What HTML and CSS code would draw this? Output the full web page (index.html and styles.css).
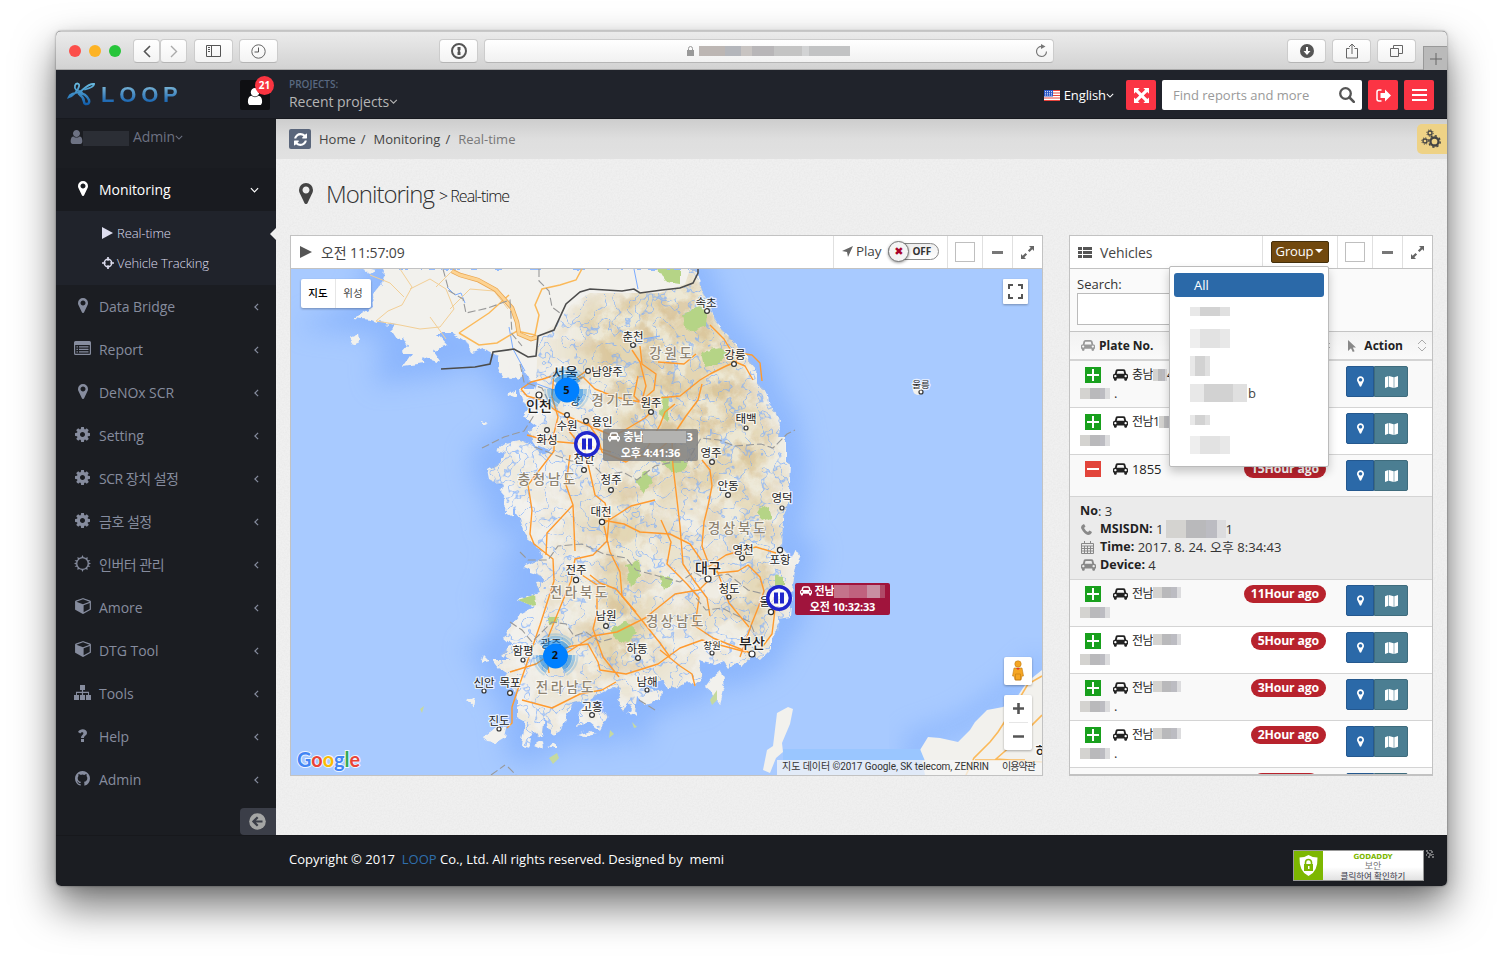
FILE: index.html
```html
<!DOCTYPE html>
<html lang="ko">
<head>
<meta charset="utf-8">
<title>LOOP - Monitoring</title>
<link rel="stylesheet" href="styles.css">
</head>
<body>
<svg class="defs" width="0" height="0" aria-hidden="true">
  <symbol id="marker" viewBox="384 128 1024 1536"><path d="M1152 640q0-106-75-181t-181-75-181 75-75 181 75 181 181 75 181-75 75-181zm256 0q0 109-33 179l-364 774q-16 33-47.5 52t-67.5 19-67.5-19-46.5-52l-365-774q-33-70-33-179 0-212 150-362t362-150 362 150 150 362z"/></symbol>
  <symbol id="cog" viewBox="128 128 1536 1536"><path d="M1152 896q0-106-75-181t-181-75-181 75-75 181 75 181 181 75 181-75 75-181zm512-109v222q0 12-8 23t-20 13l-185 28q-19 54-39 91 35 50 107 138 10 12 10 25t-9 23q-27 37-99 108t-94 71q-12 0-26-9l-138-108q-44 23-91 38-16 136-29 186-7 28-36 28h-222q-14 0-24.5-8.5t-11.5-21.5l-28-184q-49-16-90-37l-141 107q-10 9-25 9-14 0-25-11-126-114-165-168-7-10-7-23 0-12 8-23 15-21 51-66.5t54-70.5q-27-50-41-99l-183-27q-13-2-21-12.5t-8-23.5v-222q0-12 8-23t19-13l186-28q14-46 39-92-40-57-107-138-10-12-10-24 0-10 9-23 26-36 98.5-107.5t94.5-71.5q13 0 26 10l138 107q44-23 91-38 16-136 29-186 7-28 36-28h222q14 0 24.5 8.5t11.5 21.5l28 184q49 16 90 37l142-107q9-9 24-9 13 0 25 10 129 119 165 170 7 8 7 22 0 12-8 23-15 21-51 66.5t-54 70.5q26 50 41 98l183 28q13 2 21 12.5t8 23.5z"/></symbol>
  <symbol id="cube" viewBox="0 120 1664 1680"><path d="M896 1629l640-349v-636l-640 233v752zm-64-865l698-254-698-254-698 254zm832-252v768q0 35-18 65t-49 47l-704 384q-28 16-61 16t-61-16l-704-384q-31-17-49-47t-18-65v-768q0-40 23-73t61-47l704-256q22-8 44-8t44 8l704 256q38 14 61 47t23 73z"/></symbol>
  <symbol id="car" viewBox="0 128 2048 1600"><path d="M480 1088q0-66-47-113t-113-47-113 47-47 113 47 113 113 47 113-47 47-113zm36-320h1016l-89-357q-2-8-14-17.5t-21-9.5h-768q-9 0-21 9.5t-14 17.5zm1372 320q0-66-47-113t-113-47-113 47-47 113 47 113 113 47 113-47 47-113zm160-96v384q0 14-9 23t-23 9h-96v128q0 80-56 136t-136 56-136-56-56-136v-128h-1024v128q0 80-56 136t-136 56-136-56-56-136v-128h-96q-14 0-23-9t-9-23v-384q0-93 65.5-158.5t158.5-65.5h28l105-419q23-94 104-157.5t179-63.5h768q98 0 179 63.5t104 157.5l105 419h28q93 0 158.5 65.5t65.5 158.5z"/></symbol>
  <symbol id="user" viewBox="256 128 1280 1536"><path d="M1536 1399q0 109-62.5 187t-150.5 78h-854q-88 0-150.5-78t-62.5-187q0-85 8.5-160.5t31.5-152 58.5-131 94-89 134.5-34.5q131 128 313 128t313-128q76 0 134.5 34.5t94 89 58.5 131 31.5 152 8.5 160.5zm-256-887q0 159-112.5 271.5t-271.5 112.5-271.5-112.5-112.5-271.5 112.5-271.5 271.5-112.5 271.5 112.5 112.5 271.5z"/></symbol>
  <symbol id="refresh" viewBox="128 128 1536 1536"><path d="M1639 1056q0 5-1 7-64 268-268 434.5t-478 166.5q-146 0-282.5-55t-243.5-157l-129 129q-19 19-45 19t-45-19-19-45v-448q0-26 19-45t45-19h448q26 0 45 19t19 45-19 45l-137 137q71 66 161 102t187 36q134 0 250-65t186-179q11-17 53-117 8-23 30-23h192q13 0 22.5 9.5t9.5 22.5zm25-800v448q0 26-19 45t-45 19h-448q-26 0-45-19t-19-45 19-45l138-138q-148-137-349-137-134 0-250 65t-186 179q-11 17-53 117-8 23-30 23h-199q-13 0-22.5-9.5t-9.5-22.5v-7q65-268 270-434.5t480-166.5q146 0 284 55.5t245 156.5l130-129q19-19 45-19t45 19 19 45z"/></symbol>
  <symbol id="github" viewBox="128 128 1536 1536"><path d="M896 128q209 0 385.5 103t279.5 279.5 103 385.5q0 251-146.5 451.5t-378.5 277.5q-27 5-40-7t-13-30q0-3 .5-76.5t.5-134.5q0-97-52-142 57-6 102.5-18t94-39 81-66.5 53-105 20.5-150.5q0-119-79-206 37-91-8-204-28-9-81 11t-92 44l-38 24q-93-26-192-26t-192 26q-16-11-42.5-27t-83.5-38.5-85-13.5q-45 113-8 204-79 87-79 206 0 85 20.5 150t52.5 105 80.5 67 94 39 102.5 18q-39 36-49 103-21 10-45 15t-57 5-65.5-21.5-55.5-62.5q-19-32-48.5-52t-49.5-24l-20-3q-21 0-29 4.5t-5 11.5 9 14 13 12l7 5q22 10 43.5 38t31.5 51l10 23q13 38 44 61.5t67 30 69.5 7 55.5-3.5l23-4q0 38 .5 88.5t.5 54.5q0 18-13 30t-40 7q-232-77-378.5-277.5t-146.5-451.5q0-209 103-385.5t279.5-279.5 385.5-103z"/></symbol>
  <symbol id="listalt" viewBox="0 0 17 14"><path fill-rule="evenodd" d="M1.500 0h14A1.500 1.500 0 0 1 17 1.500v11a1.500 1.500 0 0 1-1.500 1.500h-14A1.500 1.500 0 0 1 0 12.500v-11A1.500 1.500 0 0 1 1.500 0zM1.200 4v8.300q0 .5.5.5h13.600q.5 0 .5-.5V4zM2.500 5.300h1.400v1.200H2.500zm2.500 0h9.500v1.200H5zM2.500 7.800h1.400V9H2.500zm2.500 0h9.500V9H5zm-2.500 2.500h1.400v1.200H2.500zm2.500 0h9.500v1.200H5z"/></symbol>
  <symbol id="sitemap" viewBox="0 0 17 15"><path d="M6 0h5v5H9.100v1.800H15V10h2v5h-5v-5h2V7.900H9.100V10H11v5H6v-5h1.900V7.900H3V10h2v5H0v-5h2V6.800h5.900V5H6z"/></symbol>
  <symbol id="sun" viewBox="0 0 17 17"><circle cx="8.500" cy="8.500" r="5.800" fill="none" stroke="currentColor" stroke-width="1.300"/><path d="M8.500 0l1.200 2.500H7.300zM8.500 17l1.200-2.500H7.300zM0 8.500l2.500-1.200v2.400zM17 8.500l-2.500-1.200v2.400zM3.200 2.200l2.800.7-1.900 1.900zM13.800 2.200l-.5 2.700-2-1.900zM3.200 14.800l.6-2.700 2 1.900zM13.800 14.800l-2.700-.7 2-2zM.6 5.200h2.700l-.8 1.900zM16.400 5.200h-2.700l.8 1.900zM.6 11.800h2.700l-.8-1.900zM16.400 11.800h-2.700l.8-1.900z"/></symbol>
  <symbol id="question" viewBox="0 0 9 13"><path d="M3 8.900C2.900 6.500 5.400 6 5.400 4.300 5.400 2.900 3.300 2.800 2.300 4.500L0 2.900C2-1.200 9-.6 9 3.800 9 6.500 6 6.900 6 8.900zM3 10h3v3H3z"/></symbol>
  <symbol id="target" viewBox="0 0 13 13"><circle cx="6.500" cy="6.500" r="4" fill="none" stroke="currentColor" stroke-width="1.600"/><path d="M5.600 0h1.800v4H5.600zM5.600 9h1.800v4H5.600zM0 5.600h4v1.800H0zM9 5.600h4v1.800H9z"/></symbol>
  <symbol id="left" viewBox="0 0 6 10"><path d="M5 1L1 5l4 4" fill="none" stroke="currentColor" stroke-width="1.500"/></symbol>
  <symbol id="down" viewBox="0 0 10 6"><path d="M1 1l4 4 4-4" fill="none" stroke="currentColor" stroke-width="1.300"/></symbol>
  <symbol id="expand" viewBox="0 0 13 13"><path d="M8 0h5v5l-1.700-1.700-2.800 2.800-1.600-1.600 2.800-2.800zM5 13H0V8l1.700 1.700 2.800-2.800 1.600 1.600-2.800 2.800z"/></symbol>
  <symbol id="mapicon" viewBox="0 0 13 12"><path d="M0 1.300L3.400 0v10.700L0 12zM4 0l4.700 1.300V12L4 10.700z"/><path d="M9.300 1.300L13 0v10.700L9.300 12z"/></symbol>
  <symbol id="sort" viewBox="0 0 10 13"><path d="M1 5l4-4 4 4M1 8l4 4 4-4" fill="none" stroke="#aaa"/></symbol>
  <symbol id="cluster" viewBox="-23 -23 46 46">
    <g fill="none" stroke="#0a84e8"><path stroke-width="4" opacity=".6" d="M-7.200 12.500A14.500 14.500 0 0 1-14.500-1M14.500-1A14.500 14.500 0 0 1 7.200 12.500M-12-8A14.500 14.500 0 0 1 12-8"/><path stroke-width="3" opacity=".35" d="M-9.200 16A18.500 18.500 0 0 1-18.500-1M18.500-1A18.500 18.500 0 0 1 9.200 16M-15-11A18.500 18.500 0 0 1 15-11"/><path stroke-width="2" opacity=".2" d="M-11 19A22 22 0 0 1-22-1M22-1A22 22 0 0 1 11 19M-18-12.500A22 22 0 0 1 18-12.500"/></g>
    <circle r="12.500" fill="#0080ff"/>
  </symbol>
  <symbol id="pause" viewBox="-14 -14 28 28"><circle r="11.300" fill="#fff" fill-opacity=".8" stroke="#2026cc" stroke-width="3.400"/><path d="M-5-5.500h4v11h-4zM1-5.500h4v11H1z" fill="#2026cc"/></symbol>
</svg>

<div class="window">
  <div class="toolbar">
    <div class="lights"><i class="red"></i><i class="yellow"></i><i class="green"></i></div>
    <div class="nav">
      <span class="tb"><svg width="8" height="13"><path d="M7 1L1.500 6.500 7 12" fill="none" stroke="#555" stroke-width="1.600"/></svg></span>
      <span class="tb"><svg width="8" height="13"><path d="M1 1l5.500 5.500L1 12" fill="none" stroke="#aaa" stroke-width="1.400"/></svg></span>
    </div>
    <span class="tb wide"><svg width="15" height="12"><path d="M.5.500h14v11H.5zM5.500.500v11M2 2.500h2M2 4.500h2M2 6.500h2" fill="none" stroke="#555"/></svg></span>
    <span class="tb wide clock"><svg width="15" height="15"><circle cx="7.500" cy="7.500" r="6.700" fill="none" stroke="#666"/><path d="M7.500 3.500v4.500h-4" fill="none" stroke="#555"/></svg></span>
    <span class="tb wide onep"><svg width="16" height="16"><circle cx="8" cy="8" r="7" fill="none" stroke="#555" stroke-width="2"/><path d="M6.500 4h3v3l-.8 1 .8 1v3h-3V9l.8-1-.8-1z" fill="#555"/></svg></span>
    <div class="url">
      <svg width="7" height="10"><path d="M0 4h7v6H0z" fill="#999"/><path d="M1.500 4V2.500a2 2 0 0 1 4 0V4" fill="none" stroke="#999"/></svg>
      <span class="mosaic addr"></span>
      <svg class="reload" width="13" height="14"><path d="M7 2.500A5 5 0 1 0 11.500 7.500" fill="none" stroke="#777" stroke-width="1.200"/><path d="M6 0l4.500 2.500L6 5z" fill="#777"/></svg>
    </div>
    <span class="tb wide dl"><svg width="14" height="14"><circle cx="7" cy="7" r="7" fill="#555"/><path d="M6 3h2v4h2.500L7 11 3.500 7H6z" fill="#fff"/></svg></span>
    <span class="tb wide"><svg width="12" height="16"><path d="M3.500 5.500h-3v9.500h11V5.500h-3M6 11V1.500M3 4l3-3 3 3" fill="none" stroke="#666"/></svg></span>
    <span class="tb wide tabs"><svg width="13" height="12"><path d="M.5 3.500h8v8h-8zM3.500 3V.5h9v8H9" fill="none" stroke="#666"/></svg></span>
    <span class="newtab"><svg width="12" height="12"><path d="M6 0v12M0 6h12" stroke="#666"/></svg></span>
  </div>

  <header class="header">
    <div class="brand">
      <svg class="swirl" width="29" height="24" viewBox="0 0 29 24" fill="none"><defs><linearGradient id="sw" gradientUnits="userSpaceOnUse" x1="0" y1="0" x2="0" y2="24"><stop offset="0" stop-color="#6ec1e4"/><stop offset="1" stop-color="#0b57a8"/></linearGradient></defs><g fill="none" stroke="url(#sw)" stroke-width="1.800" stroke-linecap="round"><path d="M27 2C21 1.500 17 7 14 9 10 10 7 7 8 3.500 9 .5 13 1 12 4.500 11 9 6 14 1.500 15.500 3 10.500 9 11 15 10.500"/><path stroke-width="2.500" d="M12 12c4-2 8 2 10 6 1 3-1 4.500-3.500 4-3.500-1 1-5-5.500-9"/><path d="M27 2c0 3-5 4.500-9 5.500"/></g></svg>
      <span class="logo">LOOP</span>
      <span class="activity"><svg width="16" height="17"><use href="#user"/></svg><b>21</b></span>
    </div>
    <div class="projects"><span class="plabel">PROJECTS:</span><span class="pname">Recent projects<svg width="9" height="5"><use href="#down"/></svg></span></div>
    <div class="lang"><svg width="16" height="11" viewBox="0 0 16 11"><path fill="#fff" d="M0 0h16v11H0z"/><path d="M0 .5h16M0 3h16M0 5.500h16M0 8h16M0 10.500h16" stroke="#e8443c" stroke-width="1.200"/><path fill="#2a56c8" d="M0 0h9v6.500H0z"/><path d="M1 1.500h7M1 3.300h7M1 5h7" stroke="#fff" stroke-width=".8" stroke-dasharray="1 1"/></svg><span>English</span><svg width="8" height="5"><use href="#down"/></svg></div>
    <span class="hbtn"><svg width="15" height="15" viewBox="0 0 16 16" fill="#fff"><path d="M0 0h6L4.200 1.800 8 5.600l3.800-3.800L10 0h6v6l-1.800-1.800L10.400 8l3.800 3.800L16 10v6h-6l1.800-1.800L8 10.400l-3.800 3.800L6 16H0v-6l1.800 1.800L5.600 8 1.800 4.200 0 6z"/></svg></span>
    <div class="find"><span>Find reports and more</span><svg width="16" height="16"><circle cx="6.500" cy="6.500" r="5.300" fill="none" stroke="#555" stroke-width="2.300"/><path d="M10.500 10.500l4.300 4.300" stroke="#555" stroke-width="2.600" stroke-linecap="round"/></svg></div>
    <span class="hbtn"><svg width="15" height="13"><path d="M5.500 1H3Q1 1 1 3v7q0 2 2 2h2.500" fill="none" stroke="#fff" stroke-width="1.500"/><path d="M4.500 4H9V.5L15 6.500 9 12.500V9H4.500z" fill="#fff"/></svg></span>
    <span class="hbtn"><svg width="15" height="12"><path d="M0 1h15M0 6h15M0 11h15" stroke="#fff" stroke-width="2"/></svg></span>
  </header>

  <div class="body">
    <aside class="side">
      <div class="login"><svg width="13" height="14"><use href="#user"/></svg><span class="mosaic dark"></span><span>Admin</span><svg width="8" height="5"><use href="#down"/></svg></div>
      <div class="item active"><span class="ic"><svg width="10" height="15"><use href="#marker"/></svg></span>Monitoring<svg class="arr" width="9" height="6"><use href="#down"/></svg></div>
      <div class="sub">
        <div class="subitem cur"><svg width="11" height="12"><path d="M0 0l11 6-11 6z"/></svg><span>Real-time</span></div>
        <div class="subitem"><svg width="12" height="12"><use href="#target"/></svg><span>Vehicle Tracking</span></div>
      </div>
      <div class="item"><span class="ic"><svg width="10" height="15"><use href="#marker"/></svg></span>Data Bridge<svg class="arr" width="5" height="8"><use href="#left"/></svg></div>
      <div class="item"><span class="ic"><svg width="17" height="14"><use href="#listalt"/></svg></span>Report<svg class="arr" width="5" height="8"><use href="#left"/></svg></div>
      <div class="item"><span class="ic"><svg width="10" height="15"><use href="#marker"/></svg></span>DeNOx SCR<svg class="arr" width="5" height="8"><use href="#left"/></svg></div>
      <div class="item"><span class="ic"><svg width="15" height="15"><use href="#cog"/></svg></span>Setting<svg class="arr" width="5" height="8"><use href="#left"/></svg></div>
      <div class="item ko"><span class="ic"><svg width="15" height="15"><use href="#cog"/></svg></span>SCR 장치 설정<svg class="arr" width="5" height="8"><use href="#left"/></svg></div>
      <div class="item ko"><span class="ic"><svg width="15" height="15"><use href="#cog"/></svg></span>금호 설정<svg class="arr" width="5" height="8"><use href="#left"/></svg></div>
      <div class="item ko"><span class="ic"><svg width="17" height="17"><use href="#sun"/></svg></span>인버터 관리<svg class="arr" width="5" height="8"><use href="#left"/></svg></div>
      <div class="item"><span class="ic"><svg width="16" height="16"><use href="#cube"/></svg></span>Amore<svg class="arr" width="5" height="8"><use href="#left"/></svg></div>
      <div class="item"><span class="ic"><svg width="16" height="16"><use href="#cube"/></svg></span>DTG Tool<svg class="arr" width="5" height="8"><use href="#left"/></svg></div>
      <div class="item"><span class="ic"><svg width="17" height="15"><use href="#sitemap"/></svg></span>Tools<svg class="arr" width="5" height="8"><use href="#left"/></svg></div>
      <div class="item"><span class="ic"><svg width="9" height="13"><use href="#question"/></svg></span>Help<svg class="arr" width="5" height="8"><use href="#left"/></svg></div>
      <div class="item"><span class="ic"><svg width="15" height="15"><use href="#github"/></svg></span>Admin<svg class="arr" width="5" height="8"><use href="#left"/></svg></div>
      <div class="minify"><svg width="17" height="17"><circle cx="8.500" cy="8.500" r="8.300" fill="#a5a6a5"/><path d="M13.500 8.500H5M8.700 4.200L4.400 8.500l4.300 4.300" fill="none" stroke="#3b3e48" stroke-width="2.200"/></svg></div>
    </aside>

    <main class="main">
      <div class="ribbon">
        <span class="rbtn"><svg width="13" height="13"><use href="#refresh"/></svg></span>
        <span class="crumb">Home</span><i>/</i><span class="crumb">Monitoring</span><i>/</i><span class="crumb last">Real-time</span>
        <span class="gears"><svg width="20" height="20" viewBox="0 0 20 20"><g fill="none" stroke="#444"><circle cx="13.500" cy="12.500" r="4" stroke-width="2.300"/><circle cx="13.500" cy="12.500" r="5.700" stroke-width="1.500" stroke-dasharray="2.200 2.200"/><circle cx="4" cy="12" r="2" stroke-width="1.300"/><circle cx="4" cy="12" r="3.200" stroke-dasharray="1.200 1.300"/><circle cx="9" cy="4" r="2" stroke-width="1.300"/><circle cx="9" cy="4" r="3.200" stroke-dasharray="1.200 1.300"/></g></svg></span>
      </div>
      <h1><svg width="14" height="21"><use href="#marker"/></svg><span class="t1">Monitoring</span><span class="t2">&gt; Real-time</span></h1>

      <div class="panels">
        <section class="panel">
          <div class="phead"><svg class="pi" width="12" height="12"><path d="M0 0l12 6-12 6z"/></svg><h2>오전 11:57:09</h2>
            <div class="cell play"><svg width="11" height="11"><path d="M11 0L6 11 5 6 0 5z"/></svg><span>Play</span><span class="switch"><b></b><em>OFF</em></span></div>
            <div class="cell c35"><i class="box"></i></div><div class="cell c30"><i class="dash"></i></div><div class="cell c30"><svg width="13" height="13"><use href="#expand"/></svg></div>
          </div>
          <svg class="map" width="751" height="506" viewBox="291 269 751 506">
            <defs>
              <path id="korea" d="M383 269L385 273 382 283 372 295 373 307 360 315 353 318 372 320 378 322 397 325 391 331 397 340 403 337 408 346 402 353 412 353 403 366 410 365 427 363 422 357 436 362 440 360 433 350 448 345 437 333 453 333 467 342 472 352 483 348 490 353 498 357 498 368 503 378 516 377 523 378 520 363 527 377 537 383 535 390 520 390 523 403 531 407 523 417 537 427 528 430 533 443 543 447 553 450 543 455 537 447 520 440 507 443 497 450 505 453 500 463 488 470 490 480 503 487 500 492 507 500 505 510 515 507 522 525 528 540 540 548 543 558 523 567 530 570 530 573 543 577 543 582 535 583 540 593 518 600 535 607 520 615 510 627 503 637 512 645 500 655 512 660 493 660 499 668 507 673 503 683 515 690 517 700 517 717 526 722 521 745 529 747 533 730 537 737 543 733 545 713 548 728 553 735 562 730 567 713 573 703 587 700 580 713 577 727 590 722 600 730 608 715 596 708 590 700 600 693 613 687 621 690 617 702 623 712 627 702 635 713 637 697 645 704 661 699 660 690 643 687 660 680 663 680 668 688 680 687 687 680 695 687 703 675 698 660 714 664 723 660 729 669 736 662 742 667 752 656 760 660 770 650 770 637 779 630 778 619 790 617 793 583 797 563 801 555 795 551 792 558 782 547 783 517 788 505 790 463 785 462 785 437 779 437 780 417 769 405 765 390 757 383 757 370 745 356 732 340 720 328 715 320 710 305 703 293 695 269z"/>
              <clipPath id="land"><use href="#korea"/></clipPath>
              <clipPath id="southclip"><path d="M480 400L536 385 538 337 560 320 571 305 590 293 660 293 685 284 690 269 860 269 860 760 440 760z"/></clipPath>
              <filter id="b6" x="-20%" y="-20%" width="140%" height="140%"><feGaussianBlur stdDeviation="13"/></filter>
              <filter id="b12" x="-20%" y="-20%" width="140%" height="140%"><feGaussianBlur stdDeviation="12"/></filter>
              <filter id="relief" x="0" y="0" width="100%" height="100%" color-interpolation-filters="sRGB"><feTurbulence type="fractalNoise" baseFrequency=".035" numOctaves="5" seed="8"/><feColorMatrix values="0 0 0 0 .88  0 0 0 0 .81  0 0 0 0 .66  5 1.500 0 0 -2.800"/></filter>
              <filter id="relief2" x="0" y="0" width="100%" height="100%" color-interpolation-filters="sRGB"><feTurbulence type="fractalNoise" baseFrequency=".05" numOctaves="6" seed="23"/><feColorMatrix values="0 0 0 0 .80  0 0 0 0 .68  0 0 0 0 .48  5 0 0 0 -2.400"/></filter>
              <filter id="rivers" x="0" y="0" width="100%" height="100%" color-interpolation-filters="sRGB"><feTurbulence type="fractalNoise" baseFrequency=".055" numOctaves="3" seed="4"/><feComponentTransfer><feFuncA type="table" tableValues="0 0 0 0 0 0 0 0 0 0 0 0 0 0 0 0 0 0 0 1 0 0 0 0 0 0 0 0 0 0 0 0 0 0 0 0 0 0 0 0"/></feComponentTransfer><feColorMatrix values="0 0 0 0 .47  0 0 0 0 .67  0 0 0 0 1  0 0 0 1 0"/></filter>
              <filter id="rough" x="-5%" y="-5%" width="110%" height="110%" color-interpolation-filters="sRGB"><feTurbulence type="fractalNoise" baseFrequency=".12" numOctaves="2" seed="3"/><feDisplacementMap in="SourceGraphic" scale="7" xChannelSelector="R" yChannelSelector="G"/></filter>
              <mask id="east"><g filter="url(#b12)" fill="#fff"><path d="M580 310L700 270 745 370 770 450 765 500 735 480 715 520 690 480 650 500 640 560 650 660 600 670 585 640 610 560 600 520 640 470 620 410 590 370zM730 500L770 510 770 640 740 620 745 570z"/><path opacity=".35" d="M560 320L700 275 790 440 780 640 700 640 650 690 535 690 560 500z"/></g></mask>
            </defs>
            <path fill="#a8caff" d="M291 269h751v506H291z"/>
            <use href="#korea" fill="none" stroke="#7dabfc" stroke-width="30" filter="url(#b6)" opacity=".65"/>
            <path d="M1042 660L1010 690 960 725 915 740V775" fill="none" stroke="#7dabfc" stroke-width="18" filter="url(#b12)" opacity=".6"/>
            <g fill="#f2f1ed">
              <g filter="url(#rough)"><use href="#korea"/>
              <path d="M508 362l9-4 5 16-2 6-10-3zM349 338l10-4 1 7-7 3zM365 268l10 2-7 4zM505 498l8 2 0 17-7-4zM484 736l12-10 11 2-2 9-10 6-7-1zM490 661l-9 2 3-8zM466 700l9-4-2 12zM508 395l8-5 0 8zM483 421l6 2-6 3zM577 735l14-4 5 3-12 3zM535 745l8-5 1 9zM548 746l7-2 0 5zM662 691l-1 8-5-3zM711 679l10-9 3 16-5 18-8-12-6-5zM634 708l-6 4 9 5z"/></g>
              <path d="M777 713L788 707 793 709 790 724 782 743 783 752 776 758 770 773 763 770 767 750 773 746z"/>
              <path d="M920 750L928 737 940 738 958 742 970 730 975 722 987 710 1003 707 1017 697 1027 682 1042 670V775H925z"/>
              <circle cx="918" cy="390" r="5"/>
            </g>
            <g clip-path="url(#land)">
              <g clip-path="url(#southclip)">
                <g mask="url(#east)"><path fill="#ebe5cf" opacity=".9" d="M291 269h600v506H291z"/><path d="M480 269h340v506H480z" filter="url(#relief)" opacity=".7"/><path d="M480 269h340v506H480z" filter="url(#relief2)" opacity=".45"/></g>
                <path d="M480 290h340v470H480z" filter="url(#relief)" opacity=".22"/>
                <path d="M291 269h600v506H291z" filter="url(#rivers)" opacity=".7"/>
              </g>
              <g fill="none" stroke="#79abff"><path d="M447 287l8 8 6-2 4 10M509 327l4 22 12 22M634 269l4 20M562 392l-14-4-16-6-8-10M620 330l18 10 22-4"/></g>
              <g fill="#b5d486" filter="url(#rough)"><path d="M658 269h22v15l-14-2zM682 315l17-9 8 5-1 15-12 6-10-8zM702 352l18-4 7 6-9 10-13 3zM634 480l12-8 6 10-8 12zM662 395l8 3-2 22-8-6zM516 598l19-6 1 12-16 3zM610 630l15-9 12 10-8 12-14-4zM625 565l14-4 2 14-10 12zM775 575l9 2 0 8-9 0zM757 510l12-4 3 12-9 4zM660 460l24 0 2 10-15 2zM550 617l9 0-1 6-9 2zM692 692l8 3 0 7zM711 694l6 0-3 10zM660 575l14 3-10 12z"/></g>
            </g>
            <g fill="#c5d9a0"><path d="M420 709l4-3-2 7zM610 730l4 4-5 4zM632 722l5 5-3 1zM549 758l8-5 2 5-6 6zM710 700l7-10 0 10-5 5z"/></g>
            <g fill="none" stroke="#f2cf96" stroke-width="1"><path d="M400 269l12 18-10 18-14 6-12 10 24 4 20 4 20-2 14-18-8-20-16-10-20 10M436 287l18-18M450 309l20-20 24 2 14 18M430 317l16 22M370 275l20 8 14 14"/></g>
            <g fill="none" stroke="#fbb959" stroke-width="1.500"><path d="M459 333l30-20 20-18M459 333l20 12 18-2 20-12 18 4M535 335l4-20-4-10 7-16 18-4 16-5 8-15"/></g>
            <path d="M452 271l8 4 18 5 18 10 16 18 5 14 2 12 12 5 6-2" fill="none" stroke="#e9a550" stroke-width="4.500"/><path d="M452 271l8 4 18 5 18 10 16 18 5 14 2 12 12 5 6-2" fill="none" stroke="#fdd392" stroke-width="3"/>
            <g fill="none" stroke="#ff9a2e" stroke-width="1.400" stroke-linejoin="round">
              <path d="M521 389l10-7 12-3 12-4 13 8 10-6 8-6M521 389l6 7 14 4 14 10 12 6 18 8 28 12 12-6 20-12 6-6"/>
              <path d="M554 372l-2 25 6 20-4 16 0 18-26 34 4 25-2 24 4 10 19 15 1 22-14 44-22 64-6 18 0 16-5 5"/>
              <path d="M567 415l2 16 16 20 6 26 4 18 10 8 4 16-2 22-14 14-18 4-4 22-14 34-12 30 4 28"/>
              <path d="M573 505l-26 28-1 22M575 551l-2-46-7-20 4-30"/>
              <path d="M567 385l16-8 12 12 20 8 25 5 14-12 2-16-14-10-2-18M640 402l-6-6 4-20M658 362l26 2 12-10M640 402l18-4 22-2 20-16 10-6 16-8 10-4 4-9 12 2 8 8 2 18"/>
              <path d="M710 325l14 14 6 10 3 12 12 5 8 14M586 420l12 18 4 14 24 10 20-12 14-25 5-13 10-8M602 452l20 8 32-6 16-14 16-24 12-16 4-16"/>
              <path d="M672 440l1 26 4 34 3 26 3 38 12 18 12 16 3 18M702 460l8 10 2 16-4 20-4 16-2 24 6 16"/>
              <path d="M602 520l22 4 16 8 30 2 20 10 14 20 14 9 20-2 10-6 12 12 4 14-4 12-8 20-12 34M708 567l18-12 14-4 16-4 20 6M709 580l-10 10-24 4-30 24-28 14-24 4-22 14-12 8M715 565l14 38 20 24"/>
              <path d="M604 526l6 26 10 20 2 24 14 17 24 30 10 14M582 575l15 10 0 28-4 16 10 28 16 20M560 650l12-4 16-2 10 18 2 8 26 4 32-10 22-16 22-8 14 4 30 8"/>
              <path d="M510 672l26-8 18-12M522 700l30 8 28-14 22-4 14-8M590 575l10 8 16 6 20 23M661 520l10 22-4 22 20 20 12 14-4 28 18 12 40 16M660 650l20 16 12 8 3 12M655 500l-24 6-28 18M632 350l8 12 6 24-4 14"/>
              <path d="M527 435l22 6 34 3 28 8M760 650l12-16 2-16 2-20"/>
            </g>
            <g fill="none" stroke="#fbb959" stroke-width="1.600"><path d="M1042 676l-14 8-12 20-18 28-8 10-16 16-8 17M1042 715l-30 30-16 14 46 3M975 760h50"/></g>
            <g fill="none" stroke="#999" stroke-width="1.100" stroke-dasharray="8 3"><path d="M443 269l6 22 14 8 3 14 22-5 22-8 2 34 10 12M539 269l0 12 10 10 3 16 8 6M520 364l4 18 18 6 10 20M482 448l22-11 20-6 14-22M535 447l20 8 16 6 18 0 14 14 20-3 14 8 18-14 18-4 14 0 14-24 18 2 16 6 26-2 12 4 14-14 8-4M520 552l8 8 20 0 10-14 24-2 22 10 22 4 10 12 22 6 22 6 14-10 10 6 24-4 20 16 16 4M510 622l12 8 10 12 20-20 14 2 8 12 12-4 14 10 14-4M696 598l10 12 16-2 28 14 8 20M491 775l14-10M508 767l8 8M639 700l16 10"/></g>
            <path d="M441 369l34-2 15-3 3-12 21-3 14 8 8-1 2-20 16-6 12-26 14-12 10-3 16 1 16 1 12-2 6 4 22-3 18-2 13-5 5-10v-10" fill="none" stroke="#4c4c4c" stroke-width="1.600"/>
            <g fill="#fff" stroke="#333" stroke-width="1.200"><circle cx="707" cy="311" r="2.400"/><circle cx="633" cy="345" r="2.400"/><circle cx="734" cy="364" r="2.400"/><circle cx="588" cy="371" r="2.400"/><circle cx="539" cy="395" r="3"/><circle cx="651" cy="412" r="2.400"/><circle cx="746" cy="428" r="2"/><circle cx="567" cy="415" r="2.400"/><circle cx="586" cy="421" r="2.400"/><circle cx="547" cy="430" r="2.400"/><circle cx="584" cy="470" r="2.400"/><circle cx="712" cy="462" r="2.400"/><circle cx="921" cy="392" r="2"/><circle cx="611" cy="490" r="2.400"/><circle cx="728" cy="495" r="2.400"/><circle cx="782" cy="508" r="2"/><circle cx="602" cy="522" r="2.600"/><circle cx="742" cy="558" r="2.400"/><circle cx="780" cy="550" r="2.600"/><circle cx="708" cy="579" r="3"/><circle cx="576" cy="580" r="2.600"/><circle cx="729" cy="597" r="2"/><circle cx="771" cy="612" r="2.600"/><circle cx="606" cy="626" r="2.400"/><circle cx="752" cy="654" r="3"/><circle cx="712" cy="653" r="2"/><circle cx="523" cy="660" r="2"/><circle cx="638" cy="658" r="2.400"/><circle cx="484" cy="691" r="2"/><circle cx="510" cy="693" r="2.400"/><circle cx="647" cy="690" r="2"/><circle cx="592" cy="715" r="2.400"/><circle cx="499" cy="729" r="2"/></g>
            <g class="city"><text x="706" y="307">속초</text><text x="633" y="341">춘천</text><text x="735" y="359">강릉</text><text x="607" y="376">남양주</text><text x="575" y="405">양</text><text x="651" y="407">원주</text><text x="746" y="423">태백</text><text x="567" y="430">수원</text><text x="602" y="426">용인</text><text x="547" y="444">화성</text><text x="584" y="463">천안</text><text x="711" y="457">영주</text><text x="921" y="388" class="s">울릉</text><text x="611" y="484">청주</text><text x="728" y="490">안동</text><text x="782" y="502">영덕</text><text x="601" y="516">대전</text><text x="743" y="554">영천</text><text x="780" y="564">포항</text><text x="576" y="574">전주</text><text x="729" y="593">청도</text><text x="770" y="606">울산</text><text x="606" y="620">남원</text><text x="712" y="649" class="s">창원</text><text x="523" y="655">함평</text><text x="551" y="648">광주</text><text x="637" y="653">하동</text><text x="484" y="687">신안</text><text x="510" y="687">목포</text><text x="647" y="686">남해</text><text x="592" y="711">고흥</text><text x="499" y="725">진도</text></g>
            <g class="city big"><text x="565" y="378">서울</text><text x="539" y="411">인천</text><text x="708" y="573">대구</text><text x="752" y="648">부산</text><text x="1042" y="756">하</text></g>
            <g class="prov"><text x="672" y="358">강원도</text><text x="614" y="405">경기도</text><text x="548" y="484">충청남도</text><text x="738" y="533">경상북도</text><text x="580" y="597">전라북도</text><text x="676" y="626">경상남도</text><text x="566" y="692">전라남도</text></g>
            <use href="#cluster" x="544" y="367" width="46" height="46"/><text class="cnt" x="566.500" y="394">5</text>
            <use href="#cluster" x="532.500" y="633" width="46" height="46"/><text class="cnt" x="555" y="659">2</text>
            <use href="#pause" x="573" y="430" width="28" height="28"/><use href="#pause" x="765" y="584" width="28" height="28"/>
            <path fill="#9ac6ff" d="M783 749h137l5 12H783z"/>
            <rect x="777" y="760" width="265" height="15" fill="#f5f5f5" fill-opacity=".75"/>
            <g class="attr"><text x="782" y="770" textLength="207">지도 데이터 ©2017 Google, SK telecom, ZENRIN</text><text x="1002" y="770" textLength="34">이용약관</text></g>
            <text class="google" x="297" y="767" textLength="63" lengthAdjust="spacingAndGlyphs"><tspan fill="#4285f4">G</tspan><tspan fill="#ea4335">o</tspan><tspan fill="#fbbc05">o</tspan><tspan fill="#4285f4">g</tspan><tspan fill="#34a853">l</tspan><tspan fill="#ea4335">e</tspan></text>
            <g class="ctl" fill="#fff"><rect x="301" y="279" width="70" height="29" rx="2"/><rect x="1003" y="279" width="25" height="25" rx="1"/><rect x="1004" y="657" width="28" height="28" rx="2"/><rect x="1004" y="695" width="28" height="55" rx="2"/></g>
            <path d="M335.500 279v29M1009 722.500h19" stroke="#e6e6e6"/>
            <text class="ct on" x="318" y="297">지도</text><text class="ct" x="353" y="297">위성</text>
            <path d="M1009 289v-4h4M1018 285h4v4M1022 294v4h-4M1013 298h-4v-4" fill="none" stroke="#555" stroke-width="2"/>
            <path d="M1013 708.500h11M1018.500 703v11M1013 736.500h11" stroke="#555" stroke-width="2.600"/>
            <g fill="#f5a623" stroke="#c07a14" stroke-width=".6"><circle cx="1018" cy="664" r="3.200"/><path d="M1014 668h8l1.500 8h-1.500l-1 4h-6l-1-4h-1.500zM1015.500 674h5v6h-5z"/></g><path d="M1016 668h4l-2 2z" fill="#d33"/>
          </svg>
          <div class="tip gray"><div><svg width="12" height="10"><use href="#car"/></svg>충남<span class="mosaic m1"></span>3</div><div>오후 4:41:36</div></div>
          <div class="tip crimson"><div><svg width="12" height="10"><use href="#car"/></svg>전남<span class="mosaic m2"></span></div><div>오전 10:32:33</div></div>
        </section>

        <section class="panel veh">
          <div class="phead"><svg class="pi" width="14" height="11"><path d="M0 0h4v3H0zM5 0h9v3H5zM0 4h4v3H0zM5 4h9v3H5zM0 8h4v3H0zM5 8h9v3H5z"/></svg><h2>Vehicles</h2>
            <div class="cell c75"><span class="group">Group<i></i></span></div>
            <div class="cell c35"><i class="box"></i></div><div class="cell c30"><i class="dash"></i></div><div class="cell c30"><svg width="13" height="13"><use href="#expand"/></svg></div>
          </div>
          <div class="filter"><label>Search:</label><div class="input"></div></div>
          <div class="thead"><svg width="14" height="11"><use href="#car"/></svg><b class="plate">Plate No.</b><svg class="sort" width="10" height="13"><use href="#sort"/></svg><svg class="ptr" width="8" height="12"><path d="M0 0l8 7.500H4.800l1.800 3.700-1.800.8L3 8.300 0 11z"/></svg><b>Action</b><svg class="sort2" width="10" height="13"><use href="#sort"/></svg></div>
          <div class="rows">
            <div class="row odd"><div class="vcell"><div class="l1"><i class="pm"></i><svg width="15" height="12"><use href="#car"/></svg><span>충남</span><span class="mosaic a"></span><span>4</span></div><div class="l2"><span class="mosaic d"></span>.</div></div><div class="acts"><i><svg width="7" height="11"><use href="#marker"/></svg></i><i><svg width="13" height="12"><use href="#mapicon"/></svg></i></div></div>
            <div class="row"><div class="vcell"><div class="l1"><i class="pm"></i><svg width="15" height="12"><use href="#car"/></svg><span>전남1</span><span class="mosaic a"></span></div><div class="l2"><span class="mosaic d"></span></div></div><div class="acts"><i><svg width="7" height="11"><use href="#marker"/></svg></i><i><svg width="13" height="12"><use href="#mapicon"/></svg></i></div></div>
            <div class="row odd short"><div class="vcell"><div class="l1"><i class="pm minus"></i><svg width="15" height="12"><use href="#car"/></svg><span class="num">1855</span></div></div><b class="ago">15Hour ago</b><div class="acts"><i><svg width="7" height="11"><use href="#marker"/></svg></i><i><svg width="13" height="12"><use href="#mapicon"/></svg></i></div></div>
            <div class="detail">
              <div><b>No</b>: 3</div>
              <div><span class="di"><svg width="11" height="11"><path d="M3 0Q0 1 0 4q3 6 7 7 3 0 4-3L8.500 6.500 7 8Q4.500 7 3 4l1.500-1.500z"/></svg></span><b>MSISDN:</b>&nbsp;1<span class="mosaic ph"></span>1</div>
              <div><span class="di"><svg width="13" height="13"><path d="M.5 2.500h12v10H.5zM.5 5h12M.5 7.500h12M.5 10h12M3.500 5v7.500M6.500 5v7.500M9.500 5v7.500M3.500 0v3M9.500 0v3" fill="none" stroke="#888"/></svg></span><b>Time:</b>&nbsp;2017. 8. 24. 오후 8:34:43</div>
              <div><span class="di"><svg width="15" height="12"><use href="#car"/></svg></span><b>Device:</b>&nbsp;4</div>
            </div>
            <div class="row odd"><div class="vcell"><div class="l1"><i class="pm"></i><svg width="15" height="12"><use href="#car"/></svg><span>전남</span><span class="mosaic e"></span></div><div class="l2"><span class="mosaic d"></span></div></div><b class="ago">11Hour ago</b><div class="acts"><i><svg width="7" height="11"><use href="#marker"/></svg></i><i><svg width="13" height="12"><use href="#mapicon"/></svg></i></div></div>
            <div class="row"><div class="vcell"><div class="l1"><i class="pm"></i><svg width="15" height="12"><use href="#car"/></svg><span>전남</span><span class="mosaic e"></span></div><div class="l2"><span class="mosaic d"></span></div></div><b class="ago">5Hour ago</b><div class="acts"><i><svg width="7" height="11"><use href="#marker"/></svg></i><i><svg width="13" height="12"><use href="#mapicon"/></svg></i></div></div>
            <div class="row odd"><div class="vcell"><div class="l1"><i class="pm"></i><svg width="15" height="12"><use href="#car"/></svg><span>전남</span><span class="mosaic e"></span></div><div class="l2"><span class="mosaic d"></span>.</div></div><b class="ago">3Hour ago</b><div class="acts"><i><svg width="7" height="11"><use href="#marker"/></svg></i><i><svg width="13" height="12"><use href="#mapicon"/></svg></i></div></div>
            <div class="row"><div class="vcell"><div class="l1"><i class="pm"></i><svg width="15" height="12"><use href="#car"/></svg><span>전남</span><span class="mosaic e"></span></div><div class="l2"><span class="mosaic d"></span>.</div></div><b class="ago">2Hour ago</b><div class="acts"><i><svg width="7" height="11"><use href="#marker"/></svg></i><i><svg width="13" height="12"><use href="#mapicon"/></svg></i></div></div>
            <div class="row odd"><div class="vcell"></div><b class="ago blank"></b><div class="acts"><i></i><i></i></div></div>
          </div>
          <div class="menu">
            <div class="all">All</div>
            <div class="opt"><span class="mosaic o1"></span></div>
            <div class="opt"><span class="mosaic o2"></span></div>
            <div class="opt"><span class="mosaic o3"></span></div>
            <div class="opt"><span class="mosaic o4"></span>b</div>
            <div class="opt"><span class="mosaic o5"></span></div>
            <div class="opt"><span class="mosaic o6"></span></div>
          </div>
        </section>
      </div>
    </main>
  </div>

  <footer class="footer">
    <p>Copyright © 2017 &nbsp;<a>LOOP</a> Co., Ltd. All rights reserved. Designed by &nbsp;memi</p>
    <div class="seal"><span class="lock"><svg width="19" height="21"><path d="M9.500 0q4 2.500 9 2.500Q19 17 9.500 21 0 17 .5 2.500q5 0 9-2.500z" fill="#fff"/><path d="M5 9h9v7H5z" fill="#7db701"/><path d="M6.500 9V7.500a3 3 0 0 1 6 0V9" fill="none" stroke="#7db701" stroke-width="1.600"/><path d="M9 11h1.500v3H9z" fill="#fff"/></svg></span><span class="stext"><b>GODADDY</b><span class="s1">보안</span><span class="s2">클릭하여 확인하기</span></span></div>
    <svg class="noise" width="8" height="8"><path d="M0 1h2M3 0h3M1 3h2M5 2h2M0 5h1M3 5h3M2 7h2M6 7h2M4 3v1M7 4v1" stroke="#ccc"/></svg>
  </footer>
</div>
</body>
</html>
```
FILE: styles.css
```css
* { box-sizing: border-box; }
body { margin: 0; width: 1503px; height: 966px; overflow: hidden; padding: 31px 56px; background: #fff; font: 13px/18px "Open Sans", "Noto Sans CJK KR", sans-serif; color: #333; }
svg { flex: none; fill: currentColor; display: block; }
i, em { font-style: normal; }
.defs { position: absolute; }
.window { width: 1391px; height: 855px; border-radius: 5px; overflow: hidden; display: flex; flex-direction: column; background: #1b1d22; white-space: nowrap; }
body::before { content: ""; position: absolute; z-index: -1; left: 56px; top: 31px; width: 1391px; height: 855px; border-radius: 5px; box-shadow: 0 0 2px rgba(0,0,0,.5), 0 20px 42px rgba(0,0,0,.55), 0 4px 14px rgba(0,0,0,.12); }

.toolbar { height: 39px; flex: none; background: linear-gradient(#ebebeb, #d2d2d2); border-top: 1px solid #c8c8c8; border-bottom: 1px solid #aaa; display: flex; align-items: flex-start; padding-top: 7px; }
.lights { display: flex; gap: 8px; padding: 6px 0 0 13px; width: 77px; }
.lights i { width: 12px; height: 12px; border-radius: 50%; }
.red { background: #fc4f4b; } .yellow { background: #fdb324; } .green { background: #27c53a; }
.nav { display: flex; gap: 0; margin-right: 7px; }
.nav .tb { width: 27px; }
.tb { width: 26px; height: 24px; background: linear-gradient(#fff, #f3f3f3); border: 1px solid #ccc; border-bottom-color: #b5b5b5; border-radius: 4px; display: flex; align-items: center; justify-content: center; }
.tb.wide { width: 39px; margin-right: 6px; }
.tb.clock { margin-right: 161px; }
.url { width: 570px; height: 24px; background: linear-gradient(#fff, #f1f1f1); border: 1px solid #ccc; border-bottom-color: #b5b5b5; border-radius: 4px; display: flex; align-items: center; padding-left: 202px; margin-right: 233px; }
.addr { width: 151px; height: 10px; margin-left: 5px; }
.url .mosaic { background: linear-gradient(90deg, #bcb6b3 0 17%, #b4b6bb 17% 28%, #c8c4c2 28% 35%, #b8b6b8 35% 50%, #c4c4c4 50% 68%, #d2d3d4 68% 73%, #c2c3c4 73%); }
.reload { margin-left: auto; margin-right: 5px; }
.tb.tabs { margin-right: 7px; }
.newtab { flex: 1; height: 24px; margin-top: 7px; background: #bababa; border: 1px solid #999; border-width: 1px 0 0 1px; display: flex; align-items: center; justify-content: center; }
.mosaic { display: inline-block; flex: none; background: linear-gradient(90deg, #d4d3d0 0 33%, #b9b9bb 33% 66%, #bcbcc2 66% 85%, #dcdcde 85%); }

.header { height: 49px; flex: none; background: #20232b; color: #fff; display: flex; align-items: center; border-bottom: 1px solid #17191f; padding: 2px 13px 0 0; }
.brand { width: 233px; display: flex; align-items: center; padding-left: 11px; }
.brand > svg { margin-top: -2px; }
.logo { font: bold 22px "Liberation Sans", sans-serif; letter-spacing: 4.800px; margin-left: 5px; width: 94px; background: linear-gradient(#7ab5d6 15%, #1763b0 80%); -webkit-background-clip: text; background-clip: text; color: transparent; }
.activity { margin-left: 45px; width: 30px; height: 30px; background: #0e0f12; border-radius: 2px; display: flex; align-items: flex-end; justify-content: center; padding-bottom: 5px; position: relative; }
.activity b { position: absolute; left: 15px; top: -4px; width: 19px; height: 19px; border-radius: 50%; background: #f93440; font: bold 10px/19px "Open Sans", sans-serif; text-align: center; }
.projects { display: flex; flex-direction: column; flex: 1; }
.plabel { font-size: 10px; line-height: 13px; font-weight: 600; color: #596981; }
.pname { color: #b5b5b5; line-height: 22px; font-size: 14px; letter-spacing: -.04px; display: flex; align-items: center; }
.lang { display: flex; align-items: center; margin-right: 12px; }
.lang span { margin-left: 4px; letter-spacing: -.1px; }
.hbtn { width: 30px; height: 30px; border-radius: 2px; background: #fb3444; display: flex; align-items: center; justify-content: center; margin-left: 6px; }
.lang + .hbtn { margin-left: 0; }
.find { width: 200px; height: 30px; border-radius: 2px; background: #fff; color: #999; margin-left: 6px; padding: 0 7px 0 11px; display: flex; align-items: center; justify-content: space-between; }

.body { display: flex; flex: none; height: 716px; }
.side { width: 220px; background: #1b1d22; color: #868c9e; display: flex; flex-direction: column; }
.login { height: 49px; padding: 0 0 13px 14px; display: flex; align-items: center; font-size: 14px; color: #6d7283; letter-spacing: -.1px; }
.dark { background: #2b2e35; width: 46px; height: 15px; margin: 2px 4px 0 0; }
.item { height: 43px; flex: none; display: flex; align-items: center; font-size: 14px; letter-spacing: -.05px; padding-right: 17px; }
.ko { letter-spacing: -.5px; }
.active { color: #fff; background: #191b20; }
.ic { width: 17px; margin: -3px 8px 0 18px; display: flex; justify-content: center; }
.arr { margin-left: auto; }
.sub { height: 74px; flex: none; background: #20232b; padding-top: 7px; position: relative; font-weight: 300; color: #dde; }
.subitem { height: 30px; display: flex; align-items: center; gap: 4px; padding-left: 46px; font-size: 13px; letter-spacing: -.1px; }
.subitem + .subitem { gap: 3px; }
.cur::after { content: ""; position: absolute; right: 0; top: 17px; border: 6px solid transparent; border-right-color: #efefef; border-left: 0; }
.minify { width: 36px; height: 27px; margin: 7px 0 0 184px; background: #3b3e48; border-radius: 4px 0 0 4px; display: flex; align-items: center; justify-content: center; padding-right: 1px; }

.main { flex: 1; background: #f0f0f0 url("data:image/svg+xml,%3Csvg xmlns='http://www.w3.org/2000/svg' width='200' height='200'%3E%3Cfilter id='n' x='0' y='0' width='100%25' height='100%25'%3E%3CfeTurbulence type='fractalNoise' baseFrequency='.6' numOctaves='2' stitchTiles='stitch'/%3E%3CfeColorMatrix values='0 0 0 0 .7 0 0 0 0 .7 0 0 0 0 .7 .5 0 0 0 -.16'/%3E%3C/filter%3E%3Crect width='200' height='200' filter='url(%23n)'/%3E%3C/svg%3E"); }
.ribbon { height: 40px; background: linear-gradient(#cdcdcd, #dedede 50%, #e1e1e1); display: flex; align-items: center; padding-left: 13px; color: #444; position: relative; }
.rbtn { width: 22px; height: 20px; background: #5a667b; color: #fff; border-radius: 2px; display: flex; align-items: center; justify-content: center; margin-right: 8px; }
.ribbon > i { margin: 0 8px 0 5px; }
.last { color: #777; }
.gears { margin-left: auto; width: 30px; height: 30px; background: #eed286; border-radius: 5px 0 0 5px; display: flex; align-items: center; justify-content: center; padding-right: 3px; }
h1 { margin: 0; height: 76px; padding: 0 0 7px 23px; display: flex; align-items: center; font-weight: 400; color: #444; }
.t1 { font-size: 24px; font-weight: 300; letter-spacing: -1px; margin: 0 5px 0 13px; color: #333; }
.t2 { font-size: 16px; font-weight: 300; letter-spacing: -.950px; color: #111; margin-top: 4px; }
.panels { display: flex; gap: 26px; padding-left: 14px; }
.panel { width: 753px; height: 541px; border: 1px solid #c2c2c2; border-bottom-width: 2px; background: #fff; position: relative; }
.veh { width: 364px; }
.phead { height: 33px; border-bottom: 1px solid #c2c2c2; display: flex; align-items: stretch; color: #555; }
.pi { margin: 10px 9px 0 9px; }
.veh .pi { margin: 11px 8px 0 8px; }
h2 { font-size: 14px; font-weight: 400; letter-spacing: -.1px; margin: 0 auto 0 0; line-height: 33px; color: #444; }
.cell { border-left: 1px solid #e0e0e0; display: flex; align-items: center; justify-content: center; color: #666; }
.play { width: 114px; padding-bottom: 2px; justify-content: flex-start; padding-left: 8px; }
.play > span:nth-child(2) { margin: 0 7px 0 3px; font-size: 13.500px; letter-spacing: -.1px; color: #444; }
.switch { width: 51px; height: 17px; border: 1px solid #888; border-radius: 9px; display: flex; align-items: center; background: linear-gradient(#eee, #fff); }
.switch b { width: 21px; height: 21px; margin-left: -1px; flex: none; border-radius: 50%; border: 1px solid #777; background: #f4f4f4; box-shadow: 0 1px 3px rgba(0,0,0,.4); display: flex; align-items: center; justify-content: center; }
.switch b::after { content: "✖"; color: #a90329; font: 11px "DejaVu Sans", sans-serif; }
.switch em { font-weight: bold; font-size: 10px; margin-left: 3px; color: #333; }
.c35 { width: 35px; } .c30 { width: 30px; } .c75 { width: 75px; padding-right: 1px; }
.box { width: 20px; height: 20px; border: 1px solid #bfbfbf; }
.dash { width: 11px; height: 3px; background: #777; }
.group { width: 58px; height: 22px; background: #71490f; border: 1px solid #45300c; border-radius: 2px; color: #fff; display: flex; align-items: center; justify-content: center; gap: 2px; letter-spacing: -.15px; padding-bottom: 2px; }
.group i { border: 4px solid transparent; border-top-color: #fff; border-bottom: 0; }

.map { font-family: "Noto Sans CJK KR", sans-serif; }
.city text, .prov text, .cnt, .ct { text-anchor: middle; }
.city { font-size: 11.500px; fill: #222; stroke: #fff; stroke-width: 2.500px; stroke-opacity: .75; paint-order: stroke; stroke-linejoin: round; }
.city .s { font-size: 9.500px; }
.big { font-size: 14px; font-weight: 500; }
.prov { font-size: 13.500px; letter-spacing: 2.700px; fill: #8f8472; font-weight: 500; stroke: #fff; stroke-width: 2px; stroke-opacity: .7; paint-order: stroke; }
.cnt { font: bold 11px "Open Sans", sans-serif; fill: #111; }
.attr { font: 10px Roboto, "Noto Sans CJK KR", sans-serif; fill: #333; }
.google { font: 500 21px Lato, sans-serif; stroke: #fff; stroke-width: 2px; stroke-opacity: .8; paint-order: stroke; }
.google tspan { font-weight: bold; }
.ct { font-size: 10.500px; fill: #444; } .on { font-weight: 500; fill: #000; }
.ctl { filter: drop-shadow(0 1px 1px rgba(0,0,0,.3)); }
.tip { position: absolute; width: 95px; height: 32px; border-radius: 2px; color: #fff; font-size: 11px; line-height: 16px; font-weight: bold; letter-spacing: -.15px; display: flex; flex-direction: column; align-items: center; }
.tip div { display: flex; align-items: center; }
.tip svg { margin-right: 3px; }
.gray { left: 312px; top: 193px; background: rgba(128,128,128,.85); }
.crimson { left: 504px; top: 347px; background: #a0143c; }
.m1 { width: 43px; height: 12px; background: #b3b3b1; } .m2 { width: 51px; height: 13px; background: linear-gradient(90deg, #c4738a 0 30%, #c0627e 30% 65%, #c88fa2 65% 90%, #b04a68 90%); }

.filter { height: 63px; padding: 6px 7px 0; background: #fafafa; border-bottom: 1px solid #c4c4c4; color: #333; }
.input { width: 120px; height: 32px; border: 1px solid #bbb; background: #fff; }
.thead { height: 29px; display: flex; align-items: center; background: linear-gradient(#f2f2f2, #fafafa); border-bottom: 2px solid #d4d4d4; padding: 0 5px 0 11px; color: #999; }
.thead b { color: #222; font-size: 12px; margin-left: 4px; }
.thead .plate { flex: 1; } .thead .sort { margin: 0 17px 0 0; } .thead .ptr { color: #888; margin-right: 4px; } .sort2 { margin-left: 14px; }
.rows { height: 413px; overflow: hidden; }
.row { height: 47px; border-bottom: 1px solid #d4d4d4; display: flex; padding: 5px 24px 0 10px; }
.odd { background: #f9f9f9; }
.short { height: 42px; }
.short .acts { margin-bottom: -4px; }
.vcell { flex: 1; }
.l1 { display: flex; align-items: center; height: 18px; color: #222; letter-spacing: -.5px; font-size: 12px; }
.l1 .num { letter-spacing: -.1px; font-size: 13px; }
.l1 svg { margin: 0 4px 0 12px; }
.pm { width: 16px; height: 16px; margin-left: 5px; background: linear-gradient(#fff, #fff) center / 12px 2px no-repeat, linear-gradient(#fff, #fff) center / 2px 12px no-repeat, #18a01d; }
.minus { background: linear-gradient(#fff, #fff) center / 12px 2px no-repeat, #e2453b; }
.l2 { display: flex; align-items: center; height: 18px; gap: 4px; }
.a { width: 14px; height: 12px; } .d { width: 30px; height: 11px; } .e { width: 28px; height: 11px; margin-top: -3px; }
.ago { height: 18px; padding: 0 7px; border-radius: 9px; background: #b8232d; color: #fff; font-size: 12.250px; letter-spacing: -.15px; margin-right: 20px; }
.blank { width: 66px; margin-right: 27px; }
.acts { display: flex; height: 31px; width: 62px; color: #fff; }
.acts i { width: 28px; background: #2b69a8; border: 1px solid #24588f; border-radius: 2px 0 0 2px; display: flex; align-items: center; justify-content: center; }
.acts i + i { width: 34px; background: #4b7e92; border-color: #3f6c7d; border-radius: 0 2px 2px 0; }
.detail { height: 83px; background: #ebebeb; border-bottom: 1px solid #d4d4d4; padding: 5px 10px 0; }
.detail > div { display: flex; align-items: center; height: 18px; }
.detail b { font-size: 12.500px; color: #222; }
.di { width: 20px; color: #888; padding-left: 1px; }
.ph { width: 60px; height: 18px; margin: 0 0 0 2px; }
.menu { position: absolute; left: 99px; top: 30px; width: 160px; height: 201px; background: #fff; border: 1px solid #bbb; border-radius: 2px; box-shadow: 0 5px 10px rgba(0,0,0,.2); padding: 6px 4px 0 4px; }
.all { height: 24px; background: #2b69a8; border-radius: 3px; color: #fff; padding-left: 20px; line-height: 24px; margin-bottom: 1px; }
.opt { height: 27px; padding-left: 16px; display: flex; align-items: center; color: #444; gap: 1px; }
.opt .mosaic { background: linear-gradient(90deg, #e8e8e8 0 25%, #d2d2d2 25% 75%, #e0e0e0 75%); }
.opt .o2, .opt .o6 { background: linear-gradient(90deg, #eee 0 25%, #e2e2e2 25% 75%, #e8e8e8 75%); }
.o1 { width: 40px; height: 9px; } .o2 { width: 40px; height: 19px; } .o3 { width: 20px; height: 20px; } .o4 { width: 57px; height: 18px; } .o5 { width: 20px; height: 10px; } .o6 { width: 40px; height: 18px; margin-top: -4px; }

.footer { flex: 1; border-top: 1px solid #17181c; color: #fff; display: flex; align-items: flex-start; padding-left: 233px; }
.footer p { margin: 13px auto 0 0; line-height: 20px; letter-spacing: 0; }
.footer a { color: #2f6fad; }
.seal { width: 131px; height: 31px; margin: 14px 2px 0 0; border: 1px solid #999; background: linear-gradient(#fff 55%, #e2e2e2); display: flex; }
.lock { width: 29px; background: #7db701; display: flex; align-items: center; justify-content: center; }
.stext { flex: 1; display: flex; flex-direction: column; align-items: center; padding-top: 2px; }
.stext b { color: #7db701; font: bold 7px/8px "DejaVu Sans", sans-serif; }
.s1 { font-size: 9px; line-height: 9px; color: #777; } .s2 { font-size: 8.500px; line-height: 11px; color: #334; }
.noise { margin: 14px 13px 0 0; }
```
